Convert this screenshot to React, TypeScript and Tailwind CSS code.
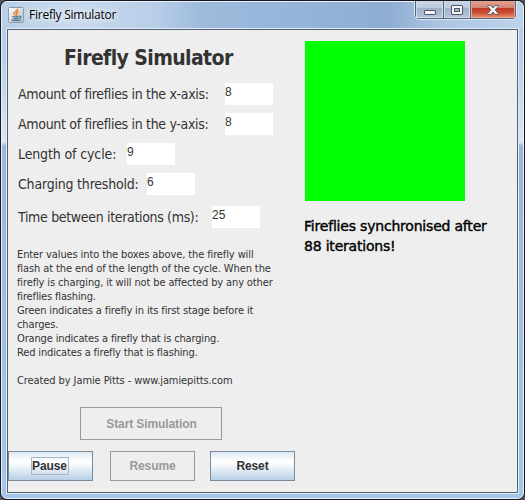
import React from "react";

const tahoma = "font-['DejaVu_Sans_Condensed','DejaVu_Sans',sans-serif] [font-stretch:condensed]";
const verdana = "font-['DejaVu_Sans',sans-serif]";
const segoe = "font-['Open_Sans','Noto_Sans',sans-serif]";
const arial = "font-['Liberation_Sans',Arial,sans-serif]";

function JavaIcon() {
  return (
    <svg width="16" height="16" viewBox="0 0 16 16" className="block" fill="none">
      <defs>
        <linearGradient id="tile" x1="0" y1="0" x2="1" y2="1">
          <stop offset="0" stopColor="#ffffff" />
          <stop offset="1" stopColor="#b5bdc5" />
        </linearGradient>
      </defs>
      <rect x="0.5" y="0.5" width="15" height="15" rx="1" fill="url(#tile)" stroke="#8d9aa9" />
      <path d="M9.6 1.8C10.2 4 5.8 4.8 6 6.6C6.1 7.4 7.1 7.8 7.4 8.6M10.6 4.7C8.8 5.4 8 6 8.6 7C9 7.7 8.8 8.3 8.3 8.7" stroke="#e87a1c" strokeWidth="1.4" />
      <path d="M4.3 9.4C5 10.2 9.8 10 10.8 9.4M5.3 11.4C7 12 9 11.9 10.2 11.4M11.2 9.2C13.7 8.8 13 11 11 11.5M3.3 12.8C5 14 10.5 14 12.7 12.8" stroke="#4d7896" strokeWidth="1.3" />
    </svg>
  );
}

function WindowControls() {
  return (
    <div className="absolute right-[6px] top-0 flex h-[19px] w-[103px] -translate-x-px overflow-hidden rounded-b-[5px] border border-t-0 border-[#dfe9f5] bg-[#53647b] px-px pb-px">
      <div className="flex h-[17px] w-[27px] items-center justify-center border border-t-0 border-[#d3deea] bg-[linear-gradient(180deg,#cbd7e6_0%,#bccadc_45%,#9fb2ca_46%,#b2c4da_100%)]">
        <svg width="12" height="5" className="relative top-[3px]">
          <rect x="0.5" y="0.5" width="11" height="4" rx="0.5" fill="#f5f5f5" stroke="#535666" />
        </svg>
      </div>
      <div className="ml-px flex h-[17px] w-[26px] items-center justify-center border border-t-0 border-[#d3deea] bg-[linear-gradient(180deg,#cbd7e6_0%,#bccadc_45%,#9fb2ca_46%,#b2c4da_100%)]">
        <svg width="12" height="10" className="relative top-px">
          <rect x="0.5" y="0.5" width="11" height="9" rx="0.5" fill="#f5f5f5" stroke="#535666" />
          <rect x="3.5" y="3.5" width="5" height="3" fill="#a4b8d0" stroke="#535666" />
        </svg>
      </div>
      <div className="ml-px flex h-[17px] flex-1 items-center justify-center border border-t-0 border-[#e8a391] bg-[linear-gradient(180deg,#e2a291_0%,#d28372_45%,#bd3927_46%,#cf5036_75%,#e08a69_100%)]">
        <svg width="12" height="10" viewBox="0 0 12 10" className="relative top-px">
          <path d="M.7.6H4L6 3L8 .6H11.3V1.4L8.2 5L11.3 8.6V9.4H8L6 7L4 9.4H.7V8.6L3.8 5L.7 1.4Z" fill="#f8f8f8" stroke="#535666" strokeWidth=".9" />
        </svg>
      </div>
    </div>
  );
}

type FieldProps = { label: string; value: string; labelClass: string; rowClass?: string };

function Field({ label, value, labelClass, rowClass = "" }: FieldProps) {
  return (
    <div className={`flex h-[22px] ${rowClass}`}>
      <label className={`${tahoma} shrink-0 whitespace-nowrap pt-px text-[14px] leading-[20px] text-[#333] ${labelClass}`}>{label}</label>
      <div className={`${arial} h-[22px] w-[48px] bg-white text-[12px] leading-[18px] text-[#333]`}>{value}</div>
    </div>
  );
}

const notes = [
  { text: "Enter values into the boxes above, the firefly will", track: "tracking-[-0.11px]" },
  { text: "flash at the end of the length of the cycle. When the", track: "tracking-[-0.11px]" },
  { text: "firefly is charging, it will not be affected by any other", track: "tracking-[-0.13px]" },
  { text: "fireflies flashing.", track: "tracking-[-0.15px]" },
  { text: "Green indicates a firefly in its first stage before it", track: "tracking-[-0.13px]" },
  { text: "charges.", track: "tracking-[-0.13px]" },
  { text: "Orange indicates a firefly that is charging.", track: "tracking-[-0.15px]" },
  { text: "Red indicates a firefly that is flashing.", track: "tracking-[-0.15px]" },
  { text: "", track: "" },
  { text: "Created by Jamie Pitts - www.jamiepitts.com", track: "tracking-[-0.09px]" },
];

const buttonBase = `${arial} flex items-center justify-center border text-[12px] font-bold tracking-[-0.1px]`;
const enabled = "border-[#7a8a99] bg-[linear-gradient(180deg,#dce7f2_0%,#ffffff_32%,#ffffff_38%,#b8cfe5_100%)] text-[#333]";
const disabled = "border-[#999] bg-[#eee] text-[#999]";

export default function App() {
  return (
    <div className="h-[500px] w-[525px] overflow-hidden bg-[#51515c]">
      <div className="relative h-[500px] w-[525px] rounded-[7px] border border-[#17191f] bg-[#17191f]">
        <div className="flex h-[498px] w-[523px] flex-col rounded-[6px] border border-[#e6f1fb] bg-[linear-gradient(180deg,#b4cbe5_0px,#b9d0ea_60px,#dbe6f2_140px,#9ab7da_144px,#a5c6ea_498px)] px-[4px] pb-[4px]">
          <header className="-mx-[4px] flex h-[26px] shrink-0 items-center rounded-t-[5px] bg-[linear-gradient(90deg,#b9cee7_0%,#c9daed_14%,#b7cde7_30%,#9ebbdd_38%,#94b3d8_60%,#8fadd2_74%,#adc7e4_85%,#bdd3ea_100%)] pl-[6px] pb-px">
            <JavaIcon />
            <h1 className={`${segoe} ml-[5px] whitespace-nowrap text-[12px] font-normal tracking-[-0.24px] text-black [text-shadow:0_0_6px_white,0_0_8px_white]`}>Firefly Simulator</h1>
          </header>
          <main className="flex min-h-0 flex-1 border border-[#e0ecf8]">
            <div className="flex min-w-0 flex-1 border border-[#53606f] bg-[#eee]">
              <section className="flex w-[287px] shrink-0 flex-col">
                <h2 className={`${tahoma} ml-[56px] mt-[15px] h-[28px] whitespace-nowrap text-[21px] font-bold leading-[26px] tracking-[-0.6px] text-[#333]`}>Firefly Simulator</h2>
                <div className="ml-[10px] mt-[10px] flex flex-col gap-[8px]">
                  <Field label="Amount of fireflies in the x-axis:" value="8" labelClass="w-[207px] tracking-[-0.32px]" />
                  <Field label="Amount of fireflies in the y-axis:" value="8" labelClass="w-[207px] tracking-[-0.32px]" />
                  <Field label="Length of cycle:" value="9" labelClass="w-[109px] tracking-[-0.13px]" />
                  <Field label="Charging threshold:" value="6" labelClass="w-[129px] tracking-[-0.2px]" />
                  <Field label="Time between iterations (ms):" value="25" labelClass="w-[194px] tracking-[-0.33px]" rowClass="mt-[3px]" />
                </div>
                <div className={`${tahoma} ml-[9px] mt-[20px] text-[11px] leading-[14px] text-[#333]`}>
                  {notes.map((line, i) => (
                    <p key={i} className={`h-[14px] whitespace-nowrap ${line.track}`}>{line.text}</p>
                  ))}
                </div>
                <button className={`${buttonBase} ${disabled} ml-[72px] mt-[19px] h-[33px] w-[142px] pl-px`}>Start Simulation</button>
                <div className="mt-[11px] flex h-[30px]">
                  <button className={`${buttonBase} ${enabled} w-[85px] pr-[2px]`}>
                    <span className="w-[38px] border border-[#a3b8cc] text-center leading-[16px]">Pause</span>
                  </button>
                  <button className={`${buttonBase} ${disabled} ml-[17px] w-[85px]`}>Resume</button>
                  <button className={`${buttonBase} ${enabled} ml-[15px] w-[85px]`}>Reset</button>
                </div>
              </section>
              <section className="ml-[10px] mt-[11px]">
                <div className="h-[160px] w-[160px] bg-[#00ff00]" />
                <p className={`${verdana} -ml-px mt-[15px] whitespace-nowrap text-[14px] leading-[20px] tracking-[-0.2px] text-black [-webkit-text-stroke:0.4px_black]`}>
                  Fireflies synchronised after<br />88 iterations!
                </p>
              </section>
            </div>
          </main>
        </div>
        <WindowControls />
      </div>
    </div>
  );
}
